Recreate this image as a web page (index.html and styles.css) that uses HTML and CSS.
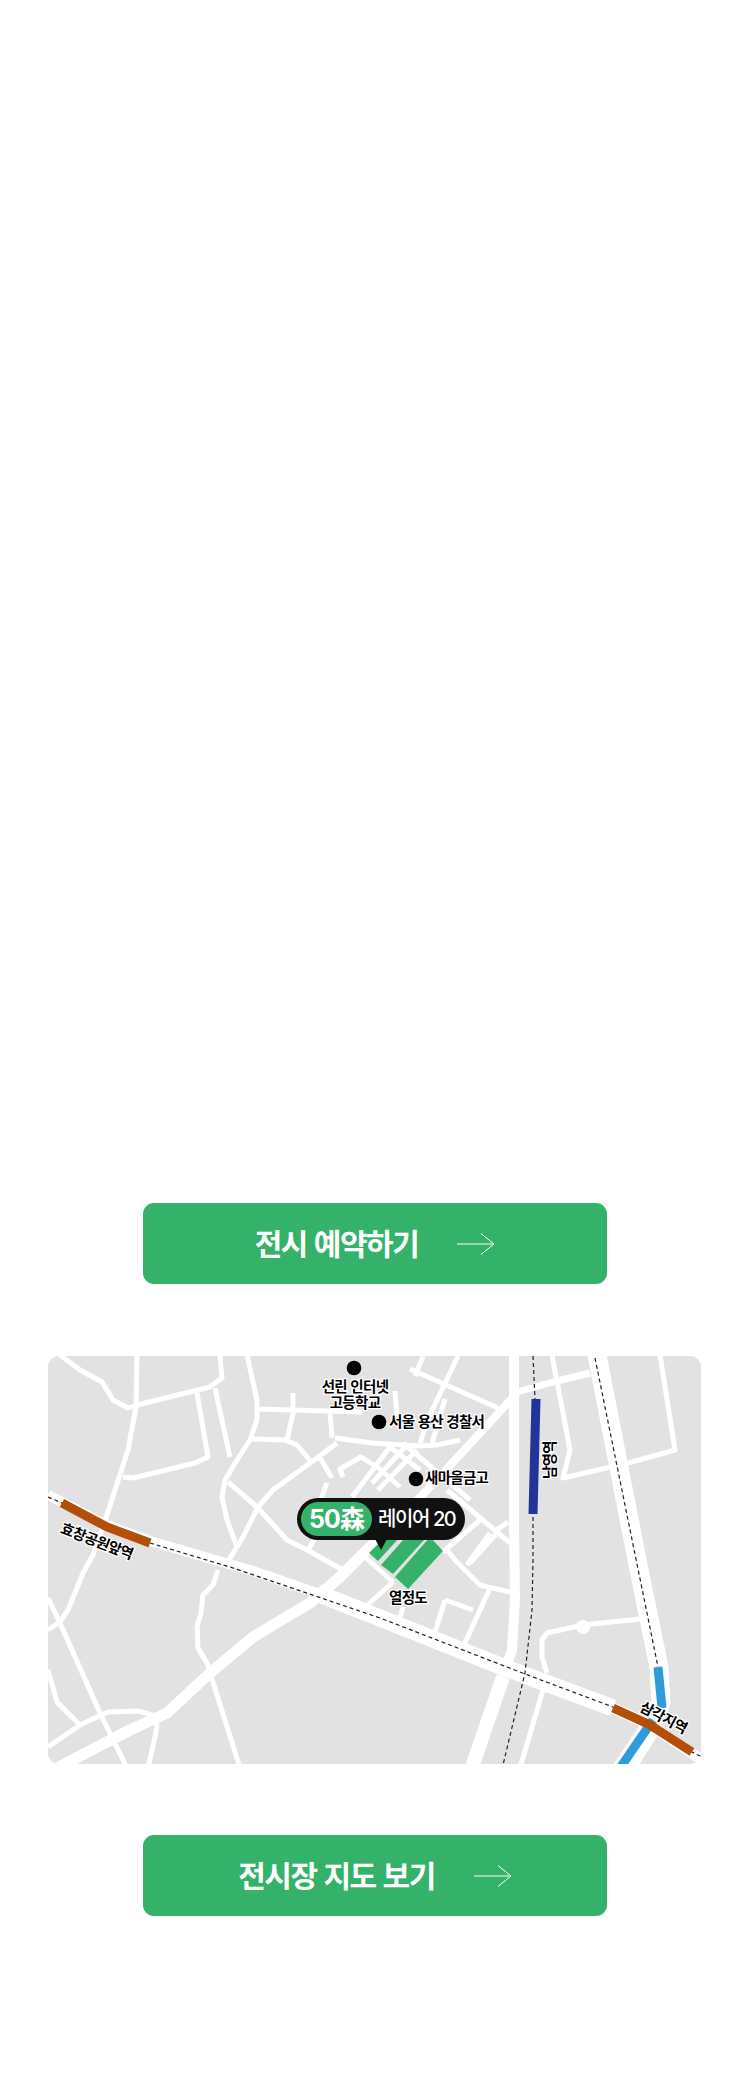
FILE: index.html
```html
<!DOCTYPE html>
<html lang="ko">
<head>
<meta charset="utf-8">
<title>전시 안내</title>
<link rel="stylesheet" href="styles.css">
</head>
<body>
<main class="page">
  <a class="btn btn-first" href="#"><span class="btn-label">전시 예약하기</span>
    <svg class="btn-arrow" viewBox="0 0 38 24"><path d="M0 12H37M24 1.500L37 12L24 22.500"/></svg></a>

  <div class="map">
    <svg class="map-art" viewBox="48 1356 653 408" xmlns="http://www.w3.org/2000/svg">
      <g class="road w10">
        <path d="M48 1495L107 1525L150 1541L253 1571L317 1593"/>
        <path d="M514 1350L514 1520L515 1600L512 1650L503 1677"/>
      </g>
      <g class="road w16">
        <path d="M317 1593L380 1618L503 1667L597 1702L613 1708"/>
        <path d="M650 1725L620 1770"/>
      </g>
      <g class="road w14">
        <path d="M503 1677L471 1770"/>
      </g>
      <g class="road w19">
        <path d="M596 1350L639 1570L659 1667L661 1702L652 1725"/>
      </g>
      <g class="road w11">
        <path d="M57 1768L130 1730L167 1713L210 1673L253 1637L310 1603L340 1577L362 1555L400 1518"/>
        <path d="M613 1708L650 1725L705 1762"/>
      </g>
      <g class="road w8">
        <path d="M400 1518L430 1487L517 1393"/>
      </g>
      <g class="road w7">
        <path d="M517 1392L553 1382L590 1373"/>
        <path d="M657 1730L633 1768"/>
      </g>
      <g class="road w5">
        <path d="M60 1355L80 1370L102 1382L113 1400L128 1408L137 1405L210 1387L222 1378L220 1355"/>
        <path d="M137 1355L136 1407L128 1450L103 1527L93 1555L83 1573L68 1610L60 1622L48 1630"/>
        <path d="M197 1393L208 1457L195 1463L133 1478L123 1477"/>
        <path d="M215 1388L230 1457"/>
        <path d="M247 1355L257 1400L257 1420L250 1440L237 1460L225 1480L222 1497L227 1520L237 1547"/>
        <path d="M257 1409L362 1412"/>
        <path d="M252 1439L285 1440L297 1445L312 1463"/>
        <path d="M293 1393L293 1413L287 1440"/>
        <path d="M330 1413L332 1438"/>
        <path d="M335 1438L372 1443L420 1446L437 1445L460 1440"/>
        <path d="M228 1482L257 1507L287 1540L307 1550L343 1570"/>
        <path d="M337 1443L317 1458L273 1490L258 1507L243 1537L227 1563"/>
        <path d="M320 1458L332 1478"/>
        <path d="M327 1483L317 1510"/>
        <path d="M317 1535L308 1550"/>
        <path d="M343 1477L340 1469L361 1457L377 1467"/>
        <path d="M352 1497L390 1447"/>
        <path d="M372 1483L405 1447"/>
        <path d="M378 1490L417 1450"/>
        <path d="M390 1447L420 1470"/>
        <path d="M373 1463L400 1487"/>
        <path d="M403 1443L470 1500"/>
        <path d="M447 1490L510 1543"/>
        <path d="M480 1520L443 1552"/>
        <path d="M508 1522L497 1530"/>
        <path d="M497 1533L470 1563"/>
        <path d="M410 1369L498 1408"/>
        <path d="M423 1356L415 1376"/>
        <path d="M458 1356L428 1419L420 1443"/>
        <path d="M445 1399L432 1443"/>
        <path d="M395 1391L397 1416"/>
        <path d="M552 1355L570 1450L563 1478L628 1463L675 1450L660 1355"/>
        <path d="M48 1747L80 1725L108 1712L138 1711L152 1715L157 1725L155 1737L148 1768"/>
        <path d="M48 1598L60 1623L100 1713L127 1768"/>
        <path d="M48 1670L57 1702L80 1725"/>
        <path d="M218 1570L213 1585L203 1595L201 1613L197 1627L198 1648L207 1663L240 1768"/>
        <path d="M543 1690L520 1768"/>
        <path d="M547 1673L542 1657L542 1640L547 1633L583 1625L640 1619"/>
        <path d="M447 1550L455 1560L480 1585L510 1592"/>
        <path d="M490 1588L465 1643"/>
        <path d="M445 1600L435 1632"/>
        <path d="M445 1600L473 1610"/>
        <path d="M365 1557L393 1582"/>
        <path d="M393 1582L365 1607"/>
        <path d="M403 1607L400 1618"/>
        <path d="M467 1565L490 1533"/>
      </g>
      <circle class="node" cx="583" cy="1627" r="7"/>

      <g class="block">
        <polygon points="369,1553 378,1561 400,1537 392,1530"/>
        <polygon points="381,1565 393,1574 424,1540 412,1530"/>
        <polygon points="395,1577 408,1589 443,1551 430,1537"/>
      </g>

      <path class="rail" d="M48 1497L62 1503L107 1527L150 1543L233 1568L380 1618L525 1674L613 1707L650 1725L692 1752L702 1757"/>
      <path class="rail" d="M595 1358L658 1667"/>
      <path class="rail" d="M533 1356L535 1399L533 1514L533 1560L532 1610L525 1673L503 1765"/>

      <path class="line-blue" d="M658 1667L662 1708"/>
      <path class="line-blue" d="M653 1720L620 1768"/>
      <path class="line-navy" d="M536 1399L533 1514"/>
      <path class="line-brown" d="M62 1503L107 1527L150 1543"/>
      <path class="line-brown" d="M613 1708L650 1725L692 1752"/>

      <circle cx="354" cy="1368" r="7.300"/>
      <circle cx="379" cy="1422" r="7.300"/>
      <circle cx="416" cy="1479" r="7.300"/>

      <text class="label" x="389" y="1427">서울 용산 경찰서</text>
      <text class="label" x="425" y="1483">새마을금고</text>
      <text class="label" x="408" y="1603" text-anchor="middle">열정도</text>
      <text class="label" text-anchor="middle" transform="translate(555 1460) rotate(-90)">남영역</text>
      <text class="label" text-anchor="middle" transform="translate(95 1546) rotate(21)">효창공원앞역</text>
      <text class="label" text-anchor="middle" transform="translate(661 1722) rotate(28)">삼각지역</text>
    </svg>
    <div class="map-note">선린 인터넷<br>고등학교</div>
    <div class="pin">
      <span class="pin-tag">50森</span>
      <span class="pin-name">레이어 20</span>
    </div>
  </div>

  <a class="btn btn-second" href="#"><span class="btn-label">전시장 지도 보기</span>
    <svg class="btn-arrow" viewBox="0 0 38 24"><path d="M0 12H37M24 1.500L37 12L24 22.500"/></svg></a>
</main>
</body>
</html>
```
FILE: styles.css
```css
html, body {
  margin: 0;
  padding: 0;
  background: #fff;
}

.page {
  display: flex;
  flex-direction: column;
  align-items: flex-start;
  width: 750px;
  height: 2075px;
  box-sizing: border-box;
  padding-top: 1203px;
  overflow: hidden;
  font-family: "Noto Sans CJK KR", "Noto Sans", sans-serif;
}

.btn {
  display: flex;
  align-items: center;
  justify-content: center;
  gap: 39px;
  width: 464px;
  height: 81px;
  margin-left: 143px;
  border-radius: 11px;
  background: #34b26a;
  color: #fff;
  text-decoration: none;
}

.btn-label {
  padding-bottom: 4px;
  font-size: 30px;
  font-weight: 700;
  letter-spacing: -1.500px;
  line-height: 1;
}

.btn-arrow {
  width: 38px;
  height: 24px;
  fill: none;
  stroke: #fff;
  stroke-width: 1;
}

.map {
  position: relative;
  width: 653px;
  height: 408px;
  margin: 72px 0 71px 48px;
  border-radius: 11px;
  overflow: hidden;
  background: #e2e2e2;
}

.map-art {
  display: block;
  width: 653px;
  height: 408px;
}

.road path {
  fill: none;
  stroke: #fff;
  stroke-linejoin: round;
}

.w19 path { stroke-width: 19; }
.w16 path { stroke-width: 17; }
.w14 path { stroke-width: 14; }
.w11 path { stroke-width: 11; }
.w10 path { stroke-width: 10; }
.w8 path { stroke-width: 8; }
.w7 path { stroke-width: 7; }
.w5 path { stroke-width: 5; }

.node { fill: #fff; }
.block polygon { fill: #34b26a; }

.rail {
  fill: none;
  stroke: #222;
  stroke-width: 1.200;
  stroke-dasharray: 4 3;
}

.line-blue, .line-navy, .line-brown { fill: none; }
.line-blue { stroke: #2d9cdb; stroke-width: 9; }
.line-navy { stroke: #22349a; stroke-width: 9; }
.line-brown { stroke: #b44f0a; stroke-width: 9; }

.label {
  font-family: "Noto Sans CJK KR", "Noto Sans", sans-serif;
  font-size: 14.500px;
  font-weight: 700;
  letter-spacing: -0.700px;
  fill: #000;
  stroke: #fff;
  stroke-width: 2.500;
  paint-order: stroke;
}

.map-note {
  position: absolute;
  left: 257px;
  top: 22px;
  width: 100px;
  color: #000;
  font-size: 14.500px;
  font-weight: 700;
  letter-spacing: -0.700px;
  line-height: 16px;
  text-align: center;
  -webkit-text-stroke: 2.500px #fff;
  paint-order: stroke fill;
}

.pin {
  position: absolute;
  left: 249px;
  top: 142px;
  display: flex;
  align-items: center;
  gap: 6px;
  box-sizing: border-box;
  width: 168px;
  height: 42px;
  padding: 4px;
  border-radius: 21px;
  background: #111;
  color: #fff;
  font-family: Inter, "Noto Sans CJK KR", sans-serif;
}

.pin::after {
  content: "";
  position: absolute;
  left: 78px;
  top: 41px;
  border-left: 6px solid transparent;
  border-right: 6px solid transparent;
  border-top: 11px solid #111;
}

.pin-tag {
  display: flex;
  align-items: center;
  justify-content: center;
  width: 71px;
  height: 34px;
  border-radius: 17px;
  background: #34b26a;
  font-size: 25px;
  font-weight: 700;
  letter-spacing: -1px;
  line-height: 1;
}

.pin-name {
  font-size: 20px;
  font-weight: 500;
  letter-spacing: -1.400px;
  line-height: 1;
  white-space: nowrap;
}
```
